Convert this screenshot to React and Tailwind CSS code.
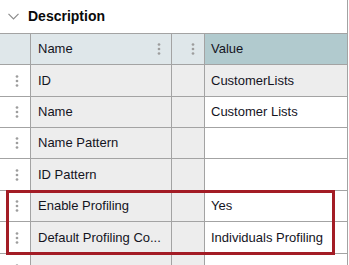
import React from 'react';

const Dots = () => (
    <svg width="4" height="12" viewBox="0 0 4 12" className="block">
        <circle cx="2" cy="1.5" r="1.35" fill="#9d9d9d" />
        <circle cx="2" cy="6" r="1.35" fill="#9d9d9d" />
        <circle cx="2" cy="10.5" r="1.35" fill="#9d9d9d" />
    </svg>
);

const rows = [
    { name: 'ID', value: 'CustomerLists', h: 'h-[32px]', readOnly: true },
    { name: 'Name', value: 'Customer Lists', h: 'h-[31px]' },
    { name: 'Name Pattern', value: '', h: 'h-[31px]' },
    { name: 'ID Pattern', value: '', h: 'h-[32px]' },
    { name: 'Enable Profiling', value: 'Yes', h: 'h-[31px]' },
    { name: 'Default Profiling Co...', value: 'Individuals Profiling', h: 'h-[32px]' },
    { name: '', value: '', h: 'h-[32px]' },
];

export default function App() {
    return (
        <div className="relative w-[349px] h-[265px] overflow-hidden bg-white text-[13px] text-[#14141e]" style={{ fontFamily: '"Liberation Sans", Arial, sans-serif' }}>
            <div className="w-[348px] border-r border-[#a3a3a3]">
                {/* Section title */}
                <div className="h-[33px] flex items-center pl-[8px] gap-[9px]">
                    <svg width="11" height="7" viewBox="0 0 11 7" fill="none">
                        <path d="M0.5 0.8 L5.5 5.8 L10.5 0.8" stroke="#8c8c8c" strokeWidth="1.2" />
                    </svg>
                    <span className="font-bold text-[14px] text-[#0a0a0a]">Description</span>
                </div>

                {/* Grid */}
                <div className="border-t border-[#a3a3a3]">
                    <div className="flex h-[31px] border-b border-[#a3a3a3] bg-[#dfe7ea]">
                        <div className="w-[31px] border-r border-[#a3a3a3]" />
                        <div className="w-[141px] border-r border-[#a3a3a3] flex items-center justify-between pl-[7px] pr-[10px]">
                            <span>Name</span>
                            <Dots />
                        </div>
                        <div className="w-[33px] border-r border-[#a3a3a3] flex items-center justify-end pr-[9px]">
                            <Dots />
                        </div>
                        <div className="flex-1 bg-[#b1cace] flex items-center pl-[6px]">Value</div>
                    </div>

                    {rows.map((r, i) => (
                        <div key={i} className={`flex ${r.h} border-b border-[#a3a3a3]`}>
                            <div className="w-[31px] border-r border-[#a3a3a3] bg-white flex items-center justify-end pr-[11px]">
                                <Dots />
                            </div>
                            <div className="w-[141px] border-r border-[#a3a3a3] bg-[#ededed] flex items-center pl-[7px] whitespace-nowrap overflow-hidden">
                                {r.name}
                            </div>
                            <div className="w-[33px] border-r border-[#a3a3a3] bg-[#ededed]" />
                            <div className={`flex-1 flex items-center pl-[6px] whitespace-nowrap ${r.readOnly ? 'bg-[#ededed]' : 'bg-white'}`}>
                                {r.value}
                            </div>
                        </div>
                    ))}
                </div>
            </div>

            {/* Highlight box */}
            <div className="absolute left-[6px] top-[190px] w-[329px] h-[65px] border-[3px] border-[#a31c25] pointer-events-none" />
        </div>
    );
}
